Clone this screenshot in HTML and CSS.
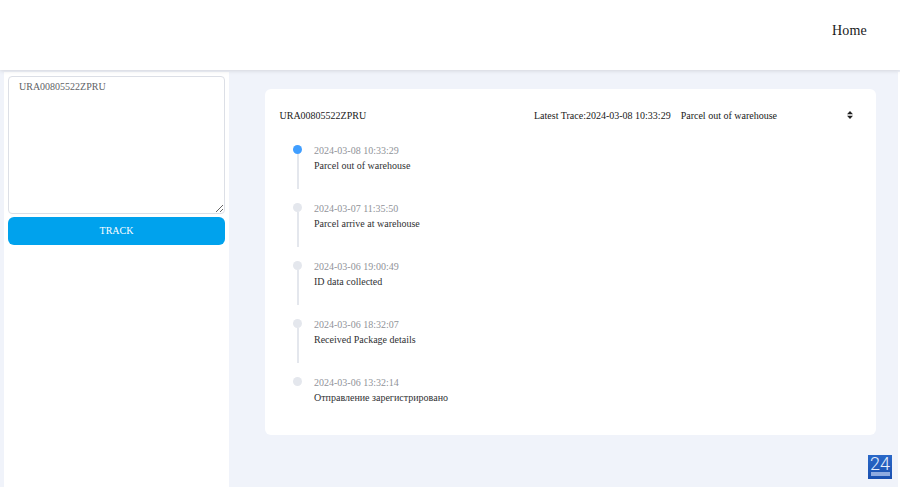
FILE: index.html
```html
<!DOCTYPE html>
<html lang="en">
<head>
  <meta charset="UTF-8">
  <title>Track</title>
  <link rel="stylesheet" href="styles.css">
</head>
<body>
  <!-- Header -->
  <header class="header">
    <a class="nav-link" href="#">Home</a>
  </header>

  <div class="main">
    <!-- Search -->
    <aside class="sidebar">
      <textarea class="track-input" spellcheck="false">URA00805522ZPRU</textarea>
      <button class="track-btn">TRACK</button>
    </aside>

    <!-- Result -->
    <section class="content">
      <div class="card">
        <div class="card-head">
          <span class="track-no">URA00805522ZPRU</span>
          <span class="latest">Latest Trace:2024-03-08 10:33:29<span class="latest-status">Parcel out of warehouse</span></span>
          <svg class="sort-icon" width="6" height="8" viewBox="0 0 6 8"><path d="M3 0L6 3.2H0zM3 8L0 4.8H6z"/></svg>
        </div>
        <ul class="timeline">
          <li class="step step-active">
            <div class="step-time">2024-03-08 10:33:29</div>
            <div class="step-text">Parcel out of warehouse</div>
          </li>
          <li class="step">
            <div class="step-time">2024-03-07 11:35:50</div>
            <div class="step-text">Parcel arrive at warehouse</div>
          </li>
          <li class="step">
            <div class="step-time">2024-03-06 19:00:49</div>
            <div class="step-text">ID data collected</div>
          </li>
          <li class="step">
            <div class="step-time">2024-03-06 18:32:07</div>
            <div class="step-text">Received Package details</div>
          </li>
          <li class="step">
            <div class="step-time">2024-03-06 13:32:14</div>
            <div class="step-text">Отправление зарегистрировано</div>
          </li>
        </ul>
      </div>
    </section>
    <div class="edge"></div>
  </div>

  <!-- Badge -->
  <div class="badge">
    <span class="badge-num">24</span>
    <span class="badge-bar"></span>
  </div>
</body>
</html>
```

FILE: styles.css
```css
* {
  box-sizing: border-box;
}

html, body {
  height: 100%;
}

body {
  margin: 0;
  font-family: "Liberation Serif", "Noto Sans CJK SC", serif;
  font-size: 12px;
  color: #303133;
  background: #f0f3fa;
  overflow: hidden;
}

/* Header */
.header {
  height: 70px;
  background: #fff;
  display: flex;
  justify-content: flex-end;
  align-items: center;
  padding: 0 33px 9px 0;
  box-shadow: 0 1px 4px rgba(0, 0, 0, 0.12);
  position: relative;
}

.nav-link {
  font-size: 14px;
  color: #1a1a1a;
  text-decoration: none;
  letter-spacing: 0.2px;
}

.main {
  display: flex;
  height: 417px;
  padding: 2px 0 0 4px;
}

/* Sidebar */
.sidebar {
  width: 225px;
  flex: none;
  background: #fff;
  padding: 4px 4px 0 4px;
}

.track-input {
  display: block;
  width: 217px;
  height: 138px;
  padding: 4px 10px;
  border: 1px solid #dcdfe6;
  border-radius: 4px;
  font-family: inherit;
  font-size: 10px;
  line-height: 12px;
  color: #606266;
  outline: none;
}

.track-btn {
  display: block;
  width: 217px;
  height: 28px;
  margin-top: 3px;
  padding: 0 0 2px;
  border: none;
  border-radius: 6px;
  background: #00a2ed;
  color: #fff;
  font-family: inherit;
  font-size: 10px;
  cursor: pointer;
}

/* Result */
.content {
  flex: 1;
  padding: 17px 22px 0 36px;
}

.edge {
  width: 2px;
  flex: none;
  background: #fff;
}

.card {
  height: 346px;
  background: #fff;
  border-radius: 6px;
  padding: 18px 15px 0 14.5px;
}

.card-head {
  display: flex;
  align-items: center;
  height: 16px;
  color: #1a1a1a;
  font-size: 10px;
}

.track-no {
  width: 254.5px;
  flex: none;
}

.latest {
  flex: 1;
}

.latest-status {
  margin-left: 10px;
}

.sort-icon {
  fill: #222;
  margin-right: 8px;
}

/* Timeline */
.timeline {
  list-style: none;
  margin: 22px 0 0 13.5px;
  padding: 0;
}

.step {
  position: relative;
  height: 58px;
  padding: 0 0 0 21px;
}

.step::before {
  content: "";
  position: absolute;
  left: 0;
  top: 0;
  width: 9px;
  height: 9px;
  border-radius: 50%;
  background: #e4e7ed;
}

.step::after {
  content: "";
  position: absolute;
  left: 3.5px;
  top: 9px;
  width: 2px;
  height: 35px;
  background: #e4e7ed;
}

.step:last-child::after {
  display: none;
}

.step-active::before {
  background: #409eff;
}

.step-time {
  font-size: 10px;
  line-height: 12px;
  color: #909399;
}

.step-text {
  margin-top: 3px;
  font-size: 10px;
  line-height: 12px;
  color: #303133;
}

/* Badge */
.badge {
  position: absolute;
  right: 8px;
  bottom: 8px;
  width: 24px;
  height: 24px;
  background: linear-gradient(#2a68c8, #1a50b0);
  display: flex;
  flex-direction: column;
  align-items: center;
}

.badge-num {
  font-family: Roboto, sans-serif;
  font-weight: 300;
  font-size: 18px;
  line-height: 17px;
  color: #e6eefc;
}

.badge-bar {
  width: 19px;
  height: 4px;
  background: #8fabe0;
}
```
